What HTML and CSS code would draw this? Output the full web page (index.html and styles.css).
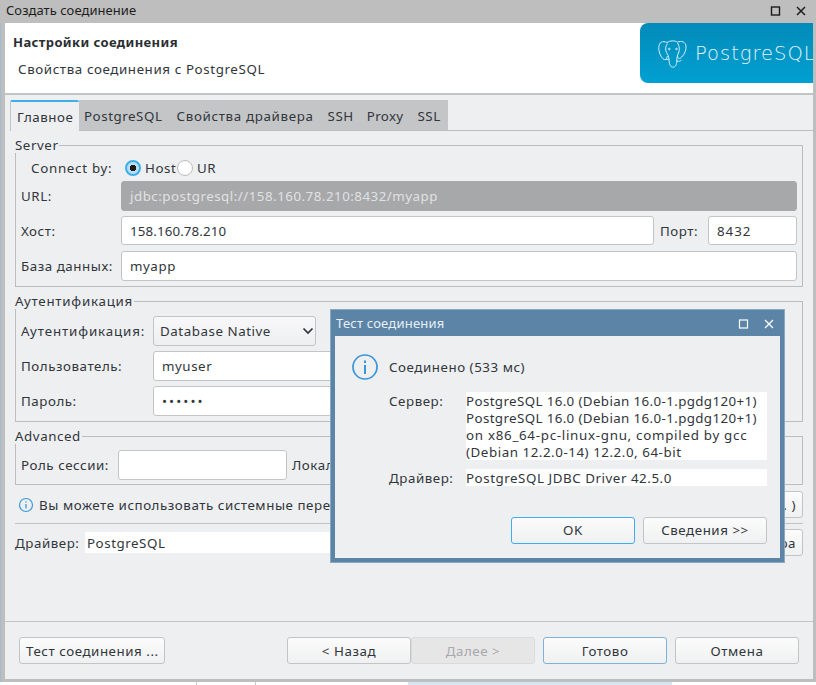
FILE: index.html
```html
<!DOCTYPE html>
<html lang="ru">
<head>
<meta charset="utf-8">
<title>Создать соединение</title>
<link rel="stylesheet" href="styles.css">
</head>
<body>
<div class="desktop">
  <div class="window">
    <div class="titlebar">
      <span class="title">Создать соединение</span>
      <span class="winbtns">
        <svg class="ico" viewBox="0 0 12 12"><rect x="1.5" y="2" width="8" height="8" fill="none" stroke="#1c1c1c" stroke-width="1.4"/></svg>
        <svg class="ico" viewBox="0 0 12 12"><path d="M2 2l8 8M10 2l-8 8" stroke="#1c1c1c" stroke-width="1.5"/></svg>
      </span>
    </div>
    <header class="banner">
      <div class="banner-text">
        <div class="banner-title">Настройки соединения</div>
        <div class="banner-sub">Свойства соединения с PostgreSQL</div>
      </div>
      <div class="logo">
        <svg class="elephant" viewBox="0 0 29 28" fill="none" stroke="#d8f1fa" stroke-width="1">
          <path d="M9 2.5C4.5 .5 1 2 .8 7.5c-.2 5 2.6 10.500 5 11.800 2 1 3.400-.8 3.400-3.200"/>
          <path d="M9 2.500c3.200-2 7.600-2.200 10.600-.3 3.500-1.600 8-.8 8.400 4.300.3 4.400-2.500 9.500-5.500 11.500-1.500 1-2.900.2-2.900-1.800"/>
          <path d="M9.500 3.500C7.500 6 7 9.500 8.500 12.500c1.500 2.500 2.300 4 2.500 7 .2 4 1 7.700 3.800 7.700 3 0 4-3 4-6.200 0-3 .5-5.500 1.700-8 1.500-3 1-6.500-.9-10"/>
          <path d="M18.800 21c2 .6 3.700.3 4.700-1.200M11 19c-1.300.8-2.700.8-3.500.2"/>
          <circle cx="11.300" cy="9" r=".8"/><circle cx="18.500" cy="9" r=".8"/>
        </svg>
        <span class="logo-text">PostgreSQL</span>
      </div>
    </header>
    <main class="content">
      <nav class="tabs">
        <span class="tab tab-active">Главное</span>
        <span class="tab tab-second">PostgreSQL</span>
        <span class="tab tab-props">Свойства драйвера</span>
        <span class="tab tab-ssh">SSH</span>
        <span class="tab tab-proxy">Proxy</span>
        <span class="tab">SSL</span>
      </nav>
      <fieldset class="group group-server">
        <legend>Server</legend>
        <div class="row row-radio">
          <span class="connect-label">Connect by:</span>
          <span class="radio radio-on"></span><span class="radio-text">Host</span>
          <span class="radio"></span><span class="radio-text">UR</span>
        </div>
        <div class="row h30">
          <label class="lbl lbl-100">URL:</label>
          <div class="field field-disabled grow">jdbc:postgresql://158.160.78.210:8432/myapp</div>
        </div>
        <div class="row h29">
          <label class="lbl lbl-100">Хост:</label>
          <div class="field grow host">158.160.78.210</div>
          <label class="lbl port-lbl">Порт:</label>
          <div class="field port">8432</div>
        </div>
        <div class="row h30 row-db">
          <label class="lbl lbl-100">База данных:</label>
          <div class="field grow">myapp</div>
        </div>
      </fieldset>
      <fieldset class="group group-auth">
        <legend class="legend-auth">Аутентификация</legend>
        <div class="row h30">
          <label class="lbl lbl-132 lbl-auth">Аутентификация:</label>
          <div class="combo">Database Native
            <svg class="chev" viewBox="0 0 12 8"><path d="M1.500 1.500L6 6l4.500-4.500" fill="none" stroke="#2e3436" stroke-width="1.700"/></svg>
          </div>
        </div>
        <div class="row h30">
          <label class="lbl lbl-132">Пользователь:</label>
          <div class="field cred">myuser</div>
        </div>
        <div class="row h30">
          <label class="lbl lbl-132">Пароль:</label>
          <div class="field cred dots">••••••</div>
        </div>
      </fieldset>
      <fieldset class="group group-adv">
        <legend>Advanced</legend>
        <div class="row h30">
          <label class="lbl lbl-97">Роль сессии:</label>
          <div class="field role"></div>
          <label class="lbl local-lbl">Локальный клиент:</label>
        </div>
      </fieldset>
      <div class="info-row">
        <svg class="info-small" viewBox="0 0 16 16"><circle cx="8" cy="8" r="6.500" fill="none" stroke="#3d9ad9" stroke-width="1.200"/><path d="M8 7v4.500M8 4.300v1.300" stroke="#3d9ad9" stroke-width="1.300"/></svg>
        <span class="info-text">Вы можете использовать системные переменные</span>
        <button class="btn vars-btn">Переменные ( ... )</button>
      </div>
      <div class="sep"></div>
      <div class="driver-row">
        <span class="driver-lbl">Драйвер:</span>
        <div class="driver-name">PostgreSQL</div>
        <button class="btn drv-btn">Настройки драйвера</button>
      </div>
    </main>
    <footer class="footer">
      <button class="btn test-btn">Тест соединения ...</button>
      <div class="nav-btns">
        <button class="btn wide">&lt; Назад</button>
        <button class="btn wide btn-disabled">Далее &gt;</button>
      </div>
      <button class="btn wide btn-focus finish">Готово</button>
      <button class="btn wide">Отмена</button>
    </footer>
  </div>
  <div class="strip"></div>

  <section class="dialog">
    <div class="dlg-title">
      <span>Тест соединения</span>
      <span class="dlg-btns">
        <svg class="ico" viewBox="0 0 12 12"><rect x="1.500" y="2" width="8" height="8" fill="none" stroke="#fff" stroke-width="1.200"/></svg>
        <svg class="ico" viewBox="0 0 12 12"><path d="M2 2l8 8M10 2l-8 8" stroke="#fff" stroke-width="1.300"/></svg>
      </span>
    </div>
    <div class="dlg-body">
      <div class="dlg-head">
        <svg class="info-big" viewBox="0 0 26 26"><circle cx="13" cy="13" r="12" fill="none" stroke="#3a96d6" stroke-width="1.700"/><path d="M13 11v9M13 6.500v2.500" stroke="#3a96d6" stroke-width="2"/></svg>
        <span>Соединено (533 мс)</span>
      </div>
      <div class="dlg-grid">
        <span class="dlg-lbl">Сервер:</span>
        <div class="dlg-val val-server"><span class="line-tight">PostgreSQL 16.0 (Debian 16.0-1.pgdg120+1)</span><br><span class="line-tight">PostgreSQL 16.0 (Debian 16.0-1.pgdg120+1)</span><br><span class="line-wide">on x86_64-pc-linux-gnu, compiled by gcc</span><br>(Debian 12.2.0-14) 12.2.0, 64-bit</div>
        <span class="dlg-lbl">Драйвер:</span>
        <div class="dlg-val val-driver">PostgreSQL JDBC Driver 42.5.0</div>
      </div>
      <div class="dlg-actions">
        <button class="btn wide btn-focus-strong">OK</button>
        <button class="btn wide">Сведения &gt;&gt;</button>
      </div>
    </div>
  </section>
</div>
</body>
</html>
```
FILE: styles.css
```css
* { box-sizing: border-box; }
html, body { margin: 0; padding: 0; }
body { width: 816px; height: 685px; overflow: hidden; background: #fff; }
.desktop {
  position: relative;
  width: 816px;
  height: 685px;
  overflow: hidden;
  font: 13.33px/17px "Noto Sans", sans-serif;
  color: #31363b;
  letter-spacing: 0.55px;
}
.window {
  height: 682px;
  display: flex;
  flex-direction: column;
  background: #bebebe;
  padding: 0 3px 3px 5px;
  box-shadow: inset 1px 0 #a3bbd0;
}
.titlebar {
  height: 23px;
  margin: 0 -3px 0 -5px;
  padding: 0 6px 2px;
  flex: none;
  display: flex;
  align-items: center;
  justify-content: space-between;
  background: #bebebe;
  color: #1d1d1d;
  font-size: 13px;
  letter-spacing: 0.05px;
}
.winbtns { display: flex; gap: 13px; margin-right: 3px; }
.ico { width: 12px; height: 12px; display: block; }
.banner {
  height: 72px;
  flex: none;
  background: #fff;
  border-bottom: 2px solid #c3c4c6;
  display: flex;
  justify-content: space-between;
  align-items: flex-start;
}
.banner-text { padding: 11px 0 0 8px; }
.banner-title { font-size: 13px; font-weight: 700; color: #2a2e32; letter-spacing: 0.4px; }
.banner-sub { margin: 10px 0 0 5px; letter-spacing: 0.61px; }
.logo {
  width: 173px;
  height: 60px;
  border-radius: 8px 0 0 8px;
  background: linear-gradient(#028bb8, #01a0d2);
  overflow: hidden;
  display: flex;
  align-items: center;
  padding: 0 0 0 18px;
}
.elephant { width: 29px; height: 28px; flex: none; margin-top: 1px; }
.logo-text {
  margin: 1px 0 0 8px;
  font: 200 19.5px/28px "DejaVu Sans", sans-serif;
  letter-spacing: 1px;
  color: #e3f5fb;
  white-space: nowrap;
}
.content {
  flex: 1;
  min-height: 0;
  background: #eeeff1;
  padding: 5px 0 0 5px;
  display: flex;
  flex-direction: column;
}
.tabs {
  height: 31px;
  flex: none;
  border-bottom: 1px solid #bcbdbf;
  display: flex;
  align-items: stretch;
  margin-bottom: 6px;
}
.tab {
  padding: 8px 7px 0;
  background: #c4c5c7;
  color: #31363b;
  white-space: nowrap;
}
.tab-active {
  padding: 7px 0 0 6px;
  width: 69px;
  background: #eeeff1;
  border-top: 2px solid #3daee9;
  border-left: 1px solid #c3c4c6;
  border-radius: 2px 2px 0 0;
  margin-bottom: -1px;
}
.tab-second { padding-left: 5px; }
.tab-props { letter-spacing: 0.67px; }
.tab-ssh { padding-right: 6px; }
.tab-proxy { letter-spacing: 0.35px; }
.group {
  margin: 0 10px 0 5px;
  padding: 6px 5px 5px 5px;
  border: 1px solid #bcbdbf;
  min-width: 0;
  flex: none;
}
.group + .group { margin-top: 6px; }
.group-server { padding-top: 7px; }
.group-auth { padding-top: 7px; padding-bottom: 5px; }
.group-adv { padding-top: 6px; padding-bottom: 4px; }
.group legend { padding: 0 1px 0 0; margin-left: -6px; line-height: 16px; color: #31363b; }
.group .legend-auth { letter-spacing: 0.75px; }
.row { display: flex; align-items: center; }
.row + .row { margin-top: 5px; }
.row-radio { height: 16px; margin-bottom: 5px; padding-left: 10px; }
.row-radio + .row { margin-top: 0; }
.row-db.row { margin-top: 6px; }
.h30 { height: 30px; }
.h29 { height: 29px; }
.h29 .lbl { padding-top: 2px; }
.h29 .field { padding-top: 2px; }
.connect-label { width: 94px; letter-spacing: 0.72px; }
.radio {
  width: 16px;
  height: 16px;
  flex: none;
  border-radius: 50%;
  background: #fff;
  border: 1px solid #bcbdbf;
}
.radio-on {
  border: 2px solid #3daee9;
  background: radial-gradient(circle, #1d1d1d 0 3px, #b9dff5 3.5px);
}
.radio-text { margin-left: 4px; width: 32px; }
.lbl { flex: none; white-space: nowrap; }
.lbl-100 { width: 100px; }
.lbl-132 { width: 132px; }
.lbl-97 { width: 97px; }
.lbl-auth { letter-spacing: 0.88px; }
.port-lbl { margin: 0 9px 0 6px; width: 39px; }
.local-lbl { margin-left: 5px; }
.field {
  height: 100%;
  background: #fff;
  border: 1px solid #c3c4c6;
  border-radius: 3px;
  padding: 0 8px;
  display: flex;
  align-items: center;
  white-space: nowrap;
  min-width: 0;
}
.grow { flex: 1; }
.host { letter-spacing: 0.12px; }
.port { width: 89px; flex: none; letter-spacing: 1px; }
.cred { width: 300px; flex: none; }
.field-disabled { background: #a7a8aa; border-color: #a7a8aa; color: #e0e1e2; letter-spacing: 0.5px; }
.dots { letter-spacing: 2.1px; }
.role { width: 169px; flex: none; }
.combo {
  width: 163px;
  height: 100%;
  flex: none;
  border: 1px solid #c3c4c6;
  border-radius: 3px;
  background: linear-gradient(#f8f8f9, #eeeff1);
  padding: 0 1px 0 6px;
  display: flex;
  align-items: center;
  justify-content: space-between;
  white-space: nowrap;
}
.chev { width: 12px; height: 8px; }
.info-row {
  height: 27px;
  flex: none;
  margin: 6px 10px 0 8px;
  display: flex;
  align-items: center;
}
.info-small { width: 16px; height: 16px; flex: none; }
.info-text { margin-left: 5px; padding-top: 2px; white-space: nowrap; }
.btn {
  font: inherit;
  letter-spacing: inherit;
  color: #31363b;
  border: 1px solid #c3c4c6;
  border-radius: 3px;
  background: linear-gradient(#fcfcfc, #eff0f1);
  height: 27px;
  padding: 2px 6px 0;
  white-space: nowrap;
}
.vars-btn { margin-left: auto; width: 180px; text-align: right; }
.sep { height: 1px; flex: none; background: #c3c4c6; margin: 5px 10px 0 5px; }
.driver-row {
  height: 27px;
  flex: none;
  margin: 5px 10px 0 5px;
  display: flex;
  align-items: center;
}
.driver-lbl { width: 70px; flex: none; padding-top: 2px; }
.driver-name { flex: 1; background: #fff; height: 21px; padding: 3px 2px 0; margin-right: 8px; }
.drv-btn { width: 180px; text-align: right; }
.footer {
  height: 58px;
  flex: none;
  background: #eeeff1;
  border-top: 1px solid #c3c4c6;
  padding: 15px 14px 0;
  display: flex;
  align-items: flex-start;
  gap: 8px;
}
.test-btn { width: 146px; margin-right: 114px; }
.nav-btns { display: flex; }
.wide { width: 124px; }
.btn-disabled { background: #e6e6e7; color: #a8a9aa; border-color: #d9dadb; }
.btn-focus { border-color: #7fb2d4; }
.btn-focus-strong { border-color: #3daee9; }
.strip {
  height: 3px;
  background: linear-gradient(90deg, #fff 0 196px, #c9c9c9 196px 197px, #fff 197px 255px, #c9c9c9 255px 256px, #fff 256px 408px, #d5e6f3 408px 672px, #fff 672px);
}
.dialog {
  position: absolute;
  left: 330px;
  top: 309px;
  width: 455px;
  height: 254px;
  border: 1px solid #8aa9c3;
  background: #5b84a7;
  padding: 0 4px 4px;
  display: flex;
  flex-direction: column;
}
.dlg-title {
  height: 26px;
  flex: none;
  color: #e9eff4;
  display: flex;
  align-items: center;
  justify-content: space-between;
  padding: 1px 5px 0 1px;
  font-size: 13px;
  letter-spacing: 0.2px;
}
.dlg-btns { display: flex; gap: 13px; }
.dlg-body {
  flex: 1;
  background: #eeeff1;
  display: flex;
  flex-direction: column;
  padding: 18px 13px 0 17px;
}
.dlg-head { display: flex; align-items: center; gap: 11px; height: 26px; }
.info-big { width: 26px; height: 26px; flex: none; }
.dlg-grid {
  display: grid;
  grid-template-columns: 77px 301px;
  row-gap: 9px;
  margin: 12px 0 0 37px;
}
.dlg-lbl { padding-top: 1px; }
.dlg-val { background: #fff; white-space: nowrap; padding-top: 1px; }
.val-server { height: 68px; }
.val-driver { height: 17px; }
.line-tight { letter-spacing: 0.38px; }
.line-wide { letter-spacing: 0.72px; }
.dlg-actions {
  display: flex;
  justify-content: flex-end;
  gap: 8px;
  margin-top: 30px;
}
.dlg-actions .btn { padding-top: 0; }
```
